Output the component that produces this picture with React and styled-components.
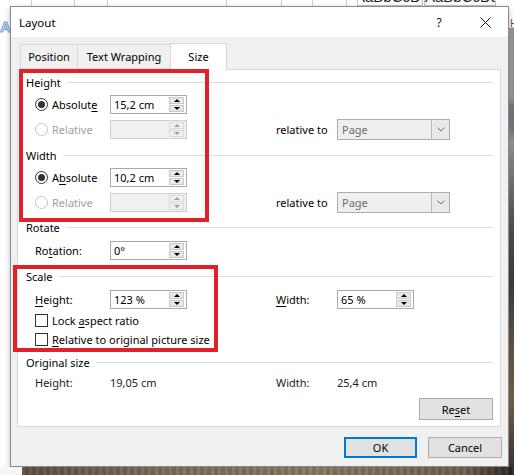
import React from "react";
import styled, { createGlobalStyle } from "styled-components";

const Global = createGlobalStyle`
  html, body { margin: 0; padding: 0; background: #fff; }
  * { box-sizing: border-box; }
`;

const Screen = styled.div`
  width: 514px;
  height: 475px;
  overflow: hidden;
  display: flex;
  flex-direction: column;
  background: #fff;
  font-family: "Noto Sans", "Segoe UI", sans-serif;
  font-size: 11px;
  color: #000;
`;

const Ribbon = styled.div`
  height: 6px;
  display: flex;
  overflow: hidden;
  background: #fff;
`;

const RibbonCell = styled.div`
  width: ${(p) => p.$w}px;
  flex: none;
  height: 6px;
  border-right: 1px solid #d0d0d0;
`;

const StyleBox = styled.div`
  width: ${(p) => p.$w}px;
  flex: none;
  height: 6px;
  margin-left: ${(p) => p.$ml || 0}px;
  border: 1px solid #c4c4c4;
  border-top: none;
  display: flex;
  align-items: flex-end;
  justify-content: center;
  overflow: hidden;
  font-family: "Liberation Sans", Arial, sans-serif;
  font-size: 15px;
  line-height: 15px;
  color: #222;
  padding-bottom: 1px;
`;

const Middle = styled.div`
  display: flex;
  height: 461px;
`;

const LeftGutter = styled.div`
  width: 10px;
  flex: none;
  padding-top: 12px;
  overflow: hidden;
  border-top: 1px solid transparent;
`;

const GhostLetter = styled.span`
  display: block;
  font-family: "Liberation Sans", Arial, sans-serif;
  font-size: 15px;
  line-height: 15px;
  font-weight: bold;
  color: #dbe8f6;
  -webkit-text-stroke: 1px #7aa7d8;
`;

const RightGutter = styled.div`
  flex: 1;
  display: flex;
  flex-direction: column;
  overflow: hidden;
`;

const RightTop = styled.div`
  height: 22px;
  padding-top: 13px;
  padding-left: 1px;
  font-family: "Liberation Sans", Arial, sans-serif;
  font-size: 11px;
  line-height: 9px;
  color: #555;
  border-bottom: 1px solid #ccc;
`;

const Photo = styled.div`
  flex: 1;
  background: linear-gradient(
    180deg,
    #8f9092 0%,
    #8c8e90 16%,
    #6c7076 18%,
    #6f7378 23%,
    #8e8d8a 26%,
    #4d4d4f 45%,
    #393a3c 58%,
    #5a4d40 70%,
    #6e5c4a 85%,
    #3c342e 100%
  );
`;

const Bottom = styled.div`
  height: 8px;
  display: flex;
`;

const BottomLeft = styled.div`
  width: 22px;
  background: #f6f6f6;
`;

const BottomPhoto = styled.div`
  flex: 1;
  background:
    repeating-linear-gradient(90deg, rgba(255,255,255,0.06) 0 3px, rgba(0,0,0,0.08) 3px 7px),
    linear-gradient(90deg, #5d4e40 0%, #7d6c5b 30%, #8a7764 60%, #6e5d4c 90%, #2a2420 100%);
`;

const Dialog = styled.div`
  width: 499px;
  flex: none;
  height: 461px;
  border: 1px solid #8a8a8a;
  background: #f0f0f0;
  display: flex;
  flex-direction: column;
  box-shadow: 0 2px 6px rgba(0, 0, 0, 0.25);
`;

const TitleBar = styled.div`
  height: 30px;
  flex: none;
  background: #fff;
  display: flex;
  align-items: center;
  padding-left: 8px;
`;

const Title = styled.span`
  flex: 1;
  font-size: 11.5px;
`;

const TitleButton = styled.span`
  width: 46px;
  height: 30px;
  display: flex;
  align-items: center;
  justify-content: center;
  font-size: 12px;
  color: #111;
`;

const Body = styled.div`
  flex: 1;
  display: flex;
  flex-direction: column;
  padding: 6px 7px 0 6px;
`;

const TabRow = styled.div`
  height: 26px;
  display: flex;
  align-items: flex-end;
  padding-left: 3px;
  position: relative;
  z-index: 1;
`;

const Tab = styled.div`
  width: ${(p) => p.$w}px;
  height: ${(p) => (p.$active ? 27 : 25)}px;
  margin-bottom: ${(p) => (p.$active ? -1 : 0)}px;
  margin-left: ${(p) => (p.$first ? 0 : -1)}px;
  border: 1px solid #d9d9d9;
  border-bottom: ${(p) => (p.$active ? "none" : "1px solid #d9d9d9")};
  background: ${(p) => (p.$active ? "#fff" : "#f0f0f0")};
  display: flex;
  align-items: center;
  justify-content: center;
  padding-bottom: ${(p) => (p.$active ? 2 : 0)}px;
  position: relative;
  z-index: ${(p) => (p.$active ? 2 : 1)};
`;

const Panel = styled.div`
  height: 358px;
  flex: none;
  border: 1px solid #d9d9d9;
  background: #fff;
  position: relative;
  display: flex;
  flex-direction: column;
  padding: 0 7px 0 8px;
`;

const Highlight = styled.div`
  position: absolute;
  left: ${(p) => p.$x}px;
  top: ${(p) => p.$y}px;
  width: ${(p) => p.$w}px;
  height: ${(p) => p.$h}px;
  border: 4px solid #e1202b;
  pointer-events: none;
  z-index: 3;
`;

const SectionHeader = styled.div`
  display: flex;
  align-items: center;
  height: 16px;
  gap: 6px;
  margin-top: ${(p) => p.$mt}px;
`;

const Rule = styled.div`
  flex: 1;
  height: 1px;
  background: #dcdcdc;
`;

const Row = styled.div`
  display: grid;
  grid-template-columns: 75px 77px 89px 61px 113px;
  align-items: center;
  height: ${(p) => p.$h}px;
  margin-top: ${(p) => p.$mt}px;
  margin-left: 9px;
  color: ${(p) => (p.$muted ? "#222" : "#000")};
`;

const Cell = styled.div`
  grid-column: ${(p) => p.$col};
  display: flex;
  align-items: center;
`;

const OptionLabel = styled.label`
  display: flex;
  align-items: center;
  gap: 4px;
  color: ${(p) => (p.$disabled ? "#a0a0a0" : "#000")};
  white-space: nowrap;
`;

const Radio = styled.span`
  width: 13px;
  height: 13px;
  border-radius: 50%;
  border: 1px solid ${(p) => (p.$disabled ? "#c4c4c4" : "#333")};
  background: #fff;
  display: flex;
  align-items: center;
  justify-content: center;
  flex: none;
  &::after {
    content: "";
    width: 7px;
    height: 7px;
    border-radius: 50%;
    background: #333;
    display: ${(p) => (p.$checked ? "block" : "none")};
  }
`;

const Box = styled.span`
  width: 13px;
  height: 13px;
  border: 1px solid #333;
  background: #fff;
  flex: none;
`;

const CheckRow = styled.div`
  display: flex;
  height: 14px;
  margin-top: ${(p) => p.$mt}px;
  margin-left: 9px;
`;

const Key = styled.span`
  text-decoration: underline;
  text-underline-offset: 2px;
`;

const SpinBox = styled.div`
  width: 77px;
  height: 19px;
  border: 1px solid ${(p) => (p.$disabled ? "#cfcfcf" : "#a9a9a9")};
  background: ${(p) => (p.$disabled ? "#f0f0f0" : "#fff")};
  display: flex;
  align-items: center;
  padding: 1px 1px 1px 3px;
`;

const SpinValue = styled.span`
  flex: 1;
  color: #000;
`;

const Spinner = styled.div`
  width: 15px;
  height: 15px;
  display: flex;
  flex-direction: column;
  gap: 1px;
  margin-right: 1px;
`;

const SpinBtn = styled.div`
  flex: 1;
  background: ${(p) => (p.$disabled ? "#f0f0f0" : "#e8e8e8")};
  border: 1px solid ${(p) => (p.$disabled ? "#dadada" : "#c9c9c9")};
  display: flex;
  align-items: center;
  justify-content: center;
  &::after {
    content: "";
    width: 0;
    height: 0;
    border-left: 3px solid transparent;
    border-right: 3px solid transparent;
    ${(p) =>
      p.$up
        ? `border-bottom: 3px solid ${p.$disabled ? "#a0a0a0" : "#000"};`
        : `border-top: 3px solid ${p.$disabled ? "#a0a0a0" : "#000"};`}
  }
`;

const Select = styled.div`
  width: 113px;
  height: 21px;
  border: 1px solid #adadad;
  background: #efefef;
  display: flex;
  align-items: stretch;
`;

const SelectText = styled.span`
  flex: 1;
  display: flex;
  align-items: center;
  padding-left: 4px;
  color: #6d6d6d;
`;

const SelectArrow = styled.span`
  width: 18px;
  border-left: 1px solid #b8b8b8;
  background: #e9e9e9;
  display: flex;
  align-items: center;
  justify-content: center;
`;

const PanelButtonRow = styled.div`
  display: flex;
  justify-content: flex-end;
  margin-top: 8px;
`;

const Button = styled.div`
  width: ${(p) => p.$w}px;
  height: ${(p) => p.$h}px;
  background: #e1e1e1;
  border: ${(p) => (p.$primary ? "2px solid #0078d7" : "1px solid #adadad")};
  display: flex;
  align-items: center;
  justify-content: center;
  color: #000;
`;

const Footer = styled.div`
  display: flex;
  justify-content: flex-end;
  gap: 11px;
  margin-top: 10px;
  margin-right: -1px;
`;

function Spin({ value, disabled }) {
  return (
    <SpinBox $disabled={disabled}>
      <SpinValue>{value}</SpinValue>
      <Spinner>
        <SpinBtn $up $disabled={disabled} />
        <SpinBtn $disabled={disabled} />
      </Spinner>
    </SpinBox>
  );
}

function Dropdown({ value }) {
  return (
    <Select>
      <SelectText>{value}</SelectText>
      <SelectArrow>
        <svg width="8" height="5" viewBox="0 0 8 5">
          <path d="M0.5 0.5 L4 4 L7.5 0.5" fill="none" stroke="#6e6e6e" strokeWidth="1" />
        </svg>
      </SelectArrow>
    </Select>
  );
}

function Section({ title, mt }) {
  return (
    <SectionHeader $mt={mt}>
      <span>{title}</span>
      <Rule />
    </SectionHeader>
  );
}

export default function App() {
  return (
    <>
      <Global />
      <Screen>
        <Ribbon>
          <RibbonCell $w={32} />
          <RibbonCell $w={43} />
          <RibbonCell $w={33} />
          <RibbonCell $w={119} />
          <RibbonCell $w={55} />
          <RibbonCell $w={31} />
          <RibbonCell $w={34} />
          <StyleBox $w={66} $ml={10}>AaBbCcDt</StyleBox>
          <StyleBox $w={72} $ml={1}>AaBbCcDt</StyleBox>
        </Ribbon>
        <Middle>
          <LeftGutter>
            <GhostLetter>A</GhostLetter>
          </LeftGutter>
          <Dialog>
            <TitleBar>
              <Title>Layout</Title>
              <TitleButton>?</TitleButton>
              <TitleButton>
                <svg width="11" height="11" viewBox="0 0 11 11">
                  <path d="M0.5 0.5 L10.5 10.5 M10.5 0.5 L0.5 10.5" stroke="#111" strokeWidth="1" />
                </svg>
              </TitleButton>
            </TitleBar>
            <Body>
              <TabRow>
                <Tab $w={58} $first>Position</Tab>
                <Tab $w={94}>Text Wrapping</Tab>
                <Tab $w={57} $active>Size</Tab>
              </TabRow>
              <Panel>
                <Highlight $x={1} $y={-1} $w={190} $h={153} />
                <Highlight $x={-5} $y={195} $w={205} $h={87} />

                <Section title="Height" mt={4} />
                <Row $h={19} $mt={5}>
                  <Cell $col={1}>
                    <OptionLabel>
                      <Radio $checked />
                      <span>Absolut<Key>e</Key></span>
                    </OptionLabel>
                  </Cell>
                  <Cell $col={2}><Spin value="15,2 cm" /></Cell>
                </Row>
                <Row $h={21} $mt={5}>
                  <Cell $col={1}>
                    <OptionLabel $disabled>
                      <Radio $disabled />
                      <span>Relative</span>
                    </OptionLabel>
                  </Cell>
                  <Cell $col={2}><Spin value="" disabled /></Cell>
                  <Cell $col={4}>relative to</Cell>
                  <Cell $col={5}><Dropdown value="Page" /></Cell>
                </Row>

                <Section title="Width" mt={7} />
                <Row $h={19} $mt={5}>
                  <Cell $col={1}>
                    <OptionLabel>
                      <Radio $checked />
                      <span>A<Key>b</Key>solute</span>
                    </OptionLabel>
                  </Cell>
                  <Cell $col={2}><Spin value="10,2 cm" /></Cell>
                </Row>
                <Row $h={21} $mt={5}>
                  <Cell $col={1}>
                    <OptionLabel $disabled>
                      <Radio $disabled />
                      <span>Relative</span>
                    </OptionLabel>
                  </Cell>
                  <Cell $col={2}><Spin value="" disabled /></Cell>
                  <Cell $col={4}>relative to</Cell>
                  <Cell $col={5}><Dropdown value="Page" /></Cell>
                </Row>

                <Section title="Rotate" mt={6} />
                <Row $h={19} $mt={6}>
                  <Cell $col={1}>Ro<Key>t</Key>ation:</Cell>
                  <Cell $col={2}><Spin value="0°" /></Cell>
                </Row>

                <Section title="Scale" mt={8} />
                <Row $h={19} $mt={6}>
                  <Cell $col={1}><span><Key>H</Key>eight:</span></Cell>
                  <Cell $col={2}><Spin value="123 %" /></Cell>
                  <Cell $col={4}><span><Key>W</Key>idth:</span></Cell>
                  <Cell $col={5}><Spin value="65 %" /></Cell>
                </Row>
                <CheckRow $mt={4}>
                  <OptionLabel>
                    <Box />
                    <span>Lock <Key>a</Key>spect ratio</span>
                  </OptionLabel>
                </CheckRow>
                <CheckRow $mt={5}>
                  <OptionLabel>
                    <Box />
                    <span><Key>R</Key>elative to original picture size</span>
                  </OptionLabel>
                </CheckRow>

                <Section title="Original size" mt={8} />
                <Row $h={16} $mt={4} $muted>
                  <Cell $col={1}>Height:</Cell>
                  <Cell $col={2}>19,05 cm</Cell>
                  <Cell $col={4}>Width:</Cell>
                  <Cell $col={5}>25,4 cm</Cell>
                </Row>
                <PanelButtonRow>
                  <Button $w={74} $h={22}>Re<Key>s</Key>et</Button>
                </PanelButtonRow>
              </Panel>
              <Footer>
                <Button $w={73} $h={21} $primary>OK</Button>
                <Button $w={74} $h={21}>Cancel</Button>
              </Footer>
            </Body>
          </Dialog>
          <RightGutter>
            <RightTop>H</RightTop>
            <Photo />
          </RightGutter>
        </Middle>
        <Bottom>
          <BottomLeft />
          <BottomPhoto />
        </Bottom>
      </Screen>
    </>
  );
}
